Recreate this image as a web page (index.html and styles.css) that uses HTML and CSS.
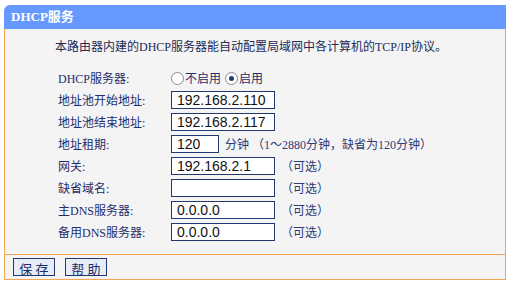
FILE: index.html
```html
<!DOCTYPE html>
<html lang="zh-CN">
<head>
<meta charset="UTF-8">
<title>DHCP服务</title>
<link rel="stylesheet" href="styles.css">
</head>
<body>
<div class="panel">
  <div class="panel-title">DHCP服务</div>
  <div class="panel-body">
    <p class="intro">本路由器内建的DHCP服务器能自动配置局域网中各计算机的TCP/IP协议。</p>
    <div class="form">
      <div class="row">
        <span class="label">DHCP服务器:</span>
        <span class="radios">
          <label class="radio"><span class="dot"></span>不启用</label>
          <label class="radio"><span class="dot on"></span>启用</label>
        </span>
      </div>
      <div class="row">
        <span class="label">地址池开始地址:</span>
        <span class="field">192.168.2.110</span>
      </div>
      <div class="row">
        <span class="label">地址池结束地址:</span>
        <span class="field">192.168.2.117</span>
      </div>
      <div class="row">
        <span class="label">地址租期:</span>
        <span class="field short">120</span>
        <span class="note">分钟 （1～2880分钟，缺省为120分钟）</span>
      </div>
      <div class="row">
        <span class="label">网关:</span>
        <span class="field">192.168.2.1</span>
        <span class="note">（可选）</span>
      </div>
      <div class="row">
        <span class="label">缺省域名:</span>
        <span class="field"></span>
        <span class="note">（可选）</span>
      </div>
      <div class="row">
        <span class="label">主DNS服务器:</span>
        <span class="field">0.0.0.0</span>
        <span class="note">（可选）</span>
      </div>
      <div class="row">
        <span class="label">备用DNS服务器:</span>
        <span class="field">0.0.0.0</span>
        <span class="note">（可选）</span>
      </div>
    </div>
  </div>
  <div class="panel-foot">
    <button class="btn">保 存</button>
    <button class="btn">帮 助</button>
  </div>
</div>
</body>
</html>
```

FILE: styles.css
```css
body {
  margin: 0;
  padding: 5px 4px;
  background: #fff;
  font-family: "Liberation Serif", "Noto Sans CJK SC", serif;
  font-size: 12px;
  color: #1f2d6b;
}
.panel {
  width: 502px;
}
.panel-title {
  height: 24px;
  line-height: 24px;
  padding-left: 7px;
  background: #6699ff;
  border-top-left-radius: 6px;
  color: #fff;
  font-weight: bold;
  font-size: 13px;
}
.panel-body {
  background: #f4f4f4;
  border-left: 1px solid #f2a650;
  border-right: 1px solid #f2a650;
  border-bottom: 1px solid #f2a650;
  padding: 9px 0 11px 0;
}
.intro {
  margin: 0 0 11px 50px;
  line-height: 18px;
  color: #222a55;
}
.form {
  padding-left: 53px;
}
.row {
  display: flex;
  align-items: center;
  height: 22px;
}
.label {
  width: 113px;
}
.radios {
  display: flex;
  gap: 4px;
}
.radio {
  display: flex;
  align-items: center;
}
.dot {
  width: 11px;
  height: 11px;
  border: 1px solid #8a8a8a;
  border-radius: 50%;
  background: #fff;
  margin-right: 1px;
  position: relative;
}
.dot.on::after {
  content: "";
  position: absolute;
  left: 3px;
  top: 3px;
  width: 5px;
  height: 5px;
  border-radius: 50%;
  background: #2a3a70;
}
.field {
  box-sizing: border-box;
  width: 104px;
  height: 18px;
  line-height: 16px;
  border: 1px solid #22386e;
  background: #fff;
  padding-left: 5px;
  font-family: "Liberation Sans", sans-serif;
  font-size: 14px;
  color: #111;
}
.field.short {
  width: 48px;
}
.note {
  margin-left: 6px;
  color: #2c3a78;
}
.panel-foot {
  background: #f4f4f4;
  border: 1px solid #f2a650;
  border-top: none;
  height: 24px;
  display: flex;
  align-items: center;
  gap: 10px;
  padding-left: 8px;
}
.btn {
  width: 42px;
  height: 18px;
  padding: 0;
  background: #e6ecf8;
  border: 1px solid #22386e;
  font-family: "Liberation Serif", "Noto Sans CJK SC", serif;
  font-size: 13px;
  color: #1f2d6b;
}
```
